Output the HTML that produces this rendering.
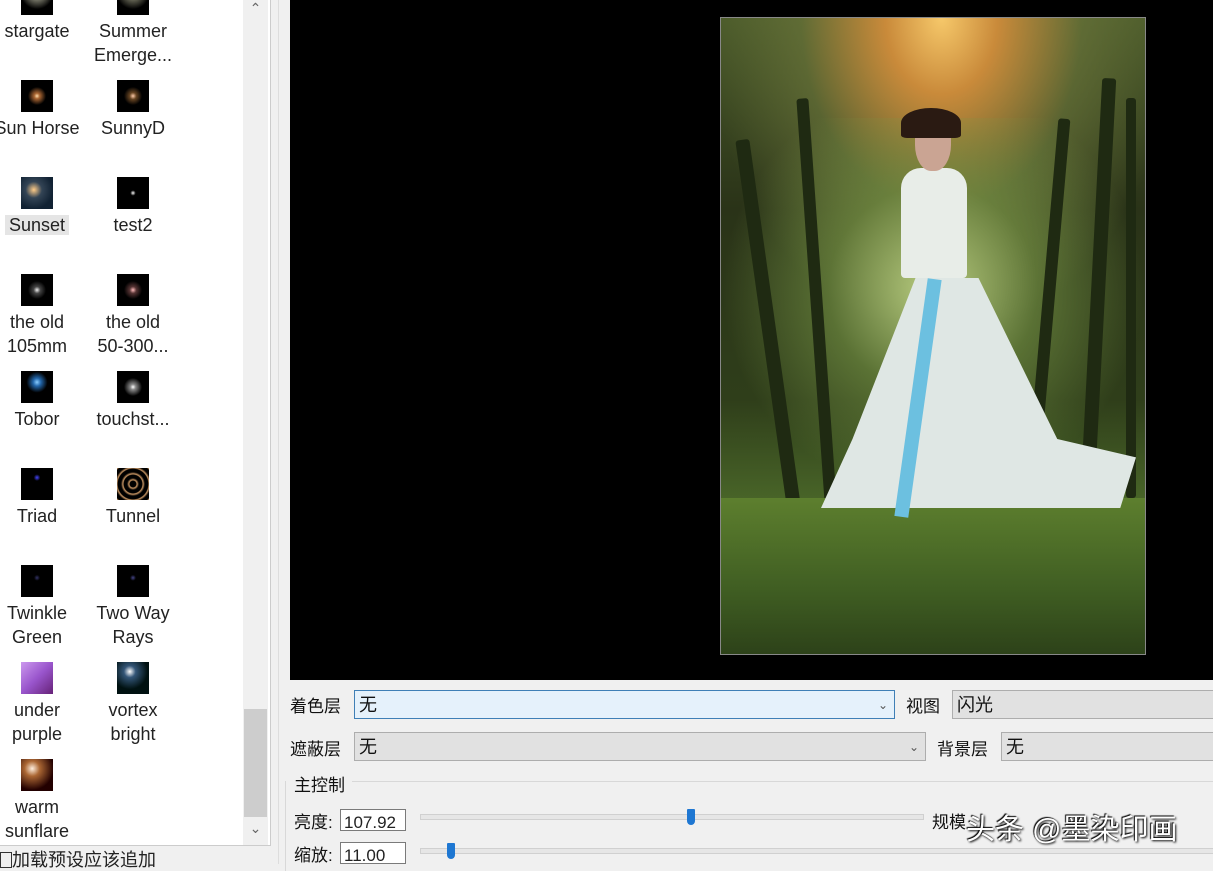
<html><head><style>
body{margin:0;width:1213px;height:864px;background:#f0f0f0;position:relative;overflow:hidden;font-family:"Liberation Sans","Noto Sans CJK SC",sans-serif;}
.lp{position:absolute;left:0;top:0;width:270px;height:845px;background:#fff;border-right:1px solid #ccc;border-bottom:1px solid #ccc}
.it{position:absolute;width:96px;text-align:center;font-size:18px;line-height:24px;color:#222}
.ic{width:32px;height:32px;margin:0 auto 4px;background:#000}
.sb{position:absolute;left:243px;top:0;width:25px;height:845px;background:#f0f0f0}
.ab{position:absolute;left:0;width:25px;text-align:center;color:#666;font-size:14px}
.lbl{position:absolute;font-size:17px;color:#111}
.box{position:absolute;height:29px;border:1px solid #adadad;background:#e1e1e1;font-size:18px;line-height:29px;padding-left:4px;box-sizing:border-box;color:#111}
.ar{position:absolute;right:6px;top:0;font-size:12px;color:#555}
.tr{position:absolute;height:4px;background:#e6e6e6;border:1px solid #d0d0d0}
.th{position:absolute;width:8px;height:16px;background:#1e77d2;border-radius:1px 1px 4px 4px}
.num{position:absolute;width:66px;height:22px;border:1px solid #7a7a7a;background:#fff;font-size:17px;line-height:26px;padding-left:3px;box-sizing:border-box;overflow:hidden;color:#222}
.tk{position:absolute;background:#1f2a12;border-radius:3px}
</style></head><body>
<div class="lp">
<div class="it" style="left:-11px;top:-17px"><div class="ic" style="background:radial-gradient(circle at 50% 30%,#fff 0,#887 20%,#000 60%)"></div>stargate</div>
<div class="it" style="left:85px;top:-17px"><div class="ic" style="background:radial-gradient(circle at 50% 30%,#ddd 0,#665 25%,#000 60%)"></div>Summer<br>Emerge...</div>
<div class="it" style="left:-11px;top:80px"><div class="ic" style="background:radial-gradient(circle at 50% 50%,#fda 0,#a63 12%,#000 40%)"></div>Sun Horse</div>
<div class="it" style="left:85px;top:80px"><div class="ic" style="background:radial-gradient(circle at 50% 50%,#fca 0,#642 15%,#000 40%)"></div>SunnyD</div>
<div class="it" style="left:-11px;top:177px"><div class="ic" style="background:radial-gradient(circle at 40% 40%,#fc8 0,#345 30%,#123 70%)"></div><span style="background:#e5e5e5;padding:0 4px">Sunset</span></div>
<div class="it" style="left:85px;top:177px"><div class="ic" style="background:radial-gradient(circle at 50% 50%,#fff 0,#000 12%)"></div>test2</div>
<div class="it" style="left:-11px;top:274px"><div class="ic" style="background:radial-gradient(circle at 50% 50%,#eee 0,#444 15%,#000 40%)"></div>the old<br>105mm</div>
<div class="it" style="left:85px;top:274px"><div class="ic" style="background:radial-gradient(circle at 50% 50%,#fbb 0,#533 15%,#000 40%)"></div>the old<br>50-300...</div>
<div class="it" style="left:-11px;top:371px"><div class="ic" style="background:radial-gradient(circle at 50% 35%,#8cf 0,#26a 15%,#000 40%)"></div>Tobor</div>
<div class="it" style="left:85px;top:371px"><div class="ic" style="background:radial-gradient(circle at 50% 50%,#fff 0,#888 12%,#000 40%)"></div>touchst...</div>
<div class="it" style="left:-11px;top:468px"><div class="ic" style="background:radial-gradient(circle at 50% 30%,#44f 0,#000 12%)"></div>Triad</div>
<div class="it" style="left:85px;top:468px"><div class="ic" style="background:repeating-radial-gradient(circle,#000 0,#000 3px,#c96 4px,#000 6px)"></div>Tunnel</div>
<div class="it" style="left:-11px;top:565px"><div class="ic" style="background:radial-gradient(circle at 50% 40%,#336 0,#000 12%)"></div>Twinkle<br>Green</div>
<div class="it" style="left:85px;top:565px"><div class="ic" style="background:radial-gradient(circle at 50% 40%,#448 0,#000 12%)"></div>Two Way<br>Rays</div>
<div class="it" style="left:-11px;top:662px"><div class="ic" style="background:linear-gradient(135deg,#c9e 0,#95c 50%,#627 100%)"></div>under<br>purple</div>
<div class="it" style="left:85px;top:662px"><div class="ic" style="background:radial-gradient(circle at 40% 30%,#fff 0,#357 20%,#011 60%)"></div>vortex<br>bright</div>
<div class="it" style="left:-11px;top:759px"><div class="ic" style="background:radial-gradient(circle at 35% 30%,#fed 0,#a63 25%,#200 70%)"></div>warm<br>sunflare</div>
<div class="sb"><div class="ab" style="top:0">&#8963;</div><div style="position:absolute;left:1px;top:709px;width:23px;height:108px;background:#cdcdcd"></div><div class="ab" style="top:820px">&#8964;</div></div>
</div>
<div style="position:absolute;left:0;top:850px;font-size:18px;color:#222;line-height:20px"><span style="display:inline-block;width:10px;height:14px;border:1px solid #333;vertical-align:-2px;margin-right:0px"></span>加载预设应该追加</div>
<div style="position:absolute;left:278px;top:0;width:1px;height:864px;background:#ddd"></div>
<div style="position:absolute;left:290px;top:0;width:923px;height:680px;background:#000"></div>
<div style="position:absolute;left:720px;top:17px;width:424px;height:636px;border:1px solid #888;overflow:hidden;background:linear-gradient(180deg,#4a5a2a 0,#2a3318 30%,#2f3e1a 60%,#4c6a2a 78%,#3f5a25 100%)">
<div style="position:absolute;left:0;top:0;width:424px;height:300px;background:radial-gradient(ellipse at 52% 0,#f6c86a 0,#c98a3a 18%,rgba(110,120,60,.6) 45%,rgba(0,0,0,0) 75%)"></div>
<div style="position:absolute;left:0;top:100px;width:424px;height:380px;background:radial-gradient(ellipse at 50% 45%,#b8cc80 0,rgba(120,150,70,.6) 35%,rgba(0,0,0,0) 70%)"></div>
<div class="tk" style="left:40px;top:120px;width:14px;height:370px;transform:rotate(-8deg)"></div>
<div class="tk" style="left:90px;top:80px;width:12px;height:420px;transform:rotate(-4deg)"></div>
<div class="tk" style="left:320px;top:100px;width:12px;height:400px;transform:rotate(5deg)"></div>
<div class="tk" style="left:370px;top:60px;width:14px;height:430px;transform:rotate(3deg)"></div>
<div class="tk" style="left:405px;top:80px;width:10px;height:400px"></div>
<div style="position:absolute;left:0;top:480px;width:424px;height:156px;background:linear-gradient(180deg,#5d7f2e,#3f5d22 60%,#2d4219)"></div>
<div style="position:absolute;left:180px;top:150px;width:66px;height:110px;background:#e8ede8;border-radius:20px 20px 4px 4px"></div>
<div style="position:absolute;left:194px;top:95px;width:36px;height:58px;background:#caa493;border-radius:45%"></div>
<div style="position:absolute;left:180px;top:90px;width:60px;height:30px;background:#2a1a12;border-radius:50% 50% 10% 10%"></div>
<div style="position:absolute;left:100px;top:260px;width:315px;height:230px;background:#dfe7e4;clip-path:polygon(30% 0,50% 0,75% 70%,100% 78%,95% 100%,0 100%,10% 70%)"></div>
<div style="position:absolute;left:190px;top:260px;width:14px;height:240px;background:#6cc0e0;transform:rotate(8deg)"></div>
</div>
<div class="lbl" style="left:290px;top:692px">着色层</div>
<div class="box" style="left:354px;top:690px;width:541px;border-color:#3f7fb6;background:#e5f1fb">无<span class="ar">&#8964;</span></div>
<div class="lbl" style="left:906px;top:692px">视图</div>
<div class="box" style="left:952px;top:690px;width:270px">闪光</div>
<div class="lbl" style="left:290px;top:735px">遮蔽层</div>
<div class="box" style="left:354px;top:732px;width:572px">无<span class="ar">&#8964;</span></div>
<div class="lbl" style="left:937px;top:735px">背景层</div>
<div class="box" style="left:1001px;top:732px;width:220px">无</div>
<div style="position:absolute;left:352px;top:781px;width:861px;height:1px;background:#d8d8d8"></div>
<div style="position:absolute;left:285px;top:781px;width:1px;height:90px;background:#d8d8d8"></div>
<div class="lbl" style="left:294px;top:771px">主控制</div>
<div class="lbl" style="left:294px;top:808px">亮度:</div>
<div class="num" style="left:340px;top:809px">107.92</div>
<div class="tr" style="left:420px;top:814px;width:502px"></div>
<div class="th" style="left:687px;top:809px"></div>
<div class="lbl" style="left:932px;top:808px">规模</div>
<div class="lbl" style="left:294px;top:841px">缩放:</div>
<div class="num" style="left:340px;top:842px">11.00</div>
<div class="tr" style="left:420px;top:848px;width:793px"></div>
<div class="th" style="left:447px;top:843px"></div>
<div style="position:absolute;left:966px;top:806px;font-size:29px;color:#fff;text-shadow:1px 1px 2px #000,-1px -1px 1px #000">头条 @墨染印画</div>
</body></html>
